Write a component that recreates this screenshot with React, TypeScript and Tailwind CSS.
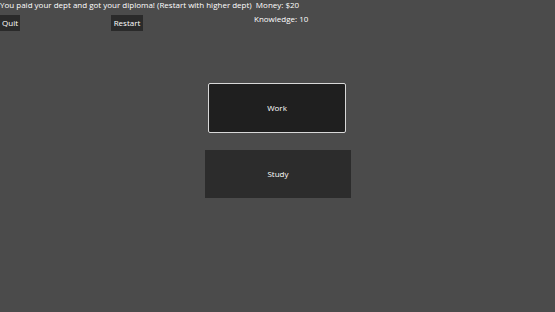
import React from 'react';

const App = () => {
  return (
    <div className="w-[555px] h-[312px] bg-[#4b4b4b] text-white font-medium overflow-hidden" style={{ fontFamily: '"Open Sans", sans-serif' }}>
      <div className="text-[8px] leading-[10px] h-[10px] whitespace-nowrap">
        You paid your dept and got your diploma! (Restart with higher dept)&nbsp;&nbsp;Money: $20
      </div>
      <div className="flex items-start mt-[5px] h-[16px]">
        <div className="w-[20px] h-[16px] bg-[#2a2a2a] text-[8px] flex items-center justify-center">Quit</div>
        <div className="ml-[91px] w-[32px] h-[16px] bg-[#2a2a2a] text-[8px] flex items-center justify-center">Restart</div>
        <div className="ml-[111px] -mt-[1px] whitespace-nowrap text-[8px] leading-[10px]">
          Knowledge: 10
        </div>
      </div>
      <div className="flex flex-col items-center mt-[52px]">
        <button className="w-[138px] h-[50px] bg-[#1f1f1f] border border-[#d8d8d8] rounded-[2px] text-[8px] font-medium text-white -ml-[1px]">
          Work
        </button>
        <button className="mt-[17px] w-[146px] h-[48px] bg-[#2c2c2c] text-[8px] font-medium text-white ml-[1px]">
          Study
        </button>
      </div>
    </div>
  );
};

export default App;
